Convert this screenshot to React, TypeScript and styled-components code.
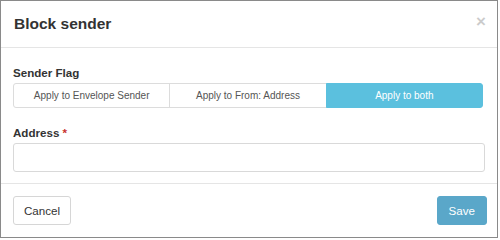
import React, { useState } from "react";
import styled, { createGlobalStyle } from "styled-components";

const Global = createGlobalStyle`
  html, body { margin: 0; padding: 0; background: #fff; }
  body { font-family: "Liberation Sans", Arial, sans-serif; color: #333; }
  * { box-sizing: border-box; }
`;

const Modal = styled.div`
  width: 498px;
  height: 238px;
  border: 1px solid #8a8a8a;
  background: #fff;
  display: flex;
  flex-direction: column;
`;

const Header = styled.div`
  height: 47px;
  border-bottom: 1px solid #e5e5e5;
  display: flex;
  align-items: center;
  justify-content: space-between;
  padding: 0 11px 0 13px;
`;

const Title = styled.h4`
  margin: 0;
  font-size: 15.5px;
  font-weight: bold;
  color: #333;
  line-height: 1.2;
`;

const Close = styled.button`
  border: 0;
  background: none;
  padding: 0;
  font-family: "Liberation Sans", Arial, sans-serif;
  font-size: 17px;
  font-weight: bold;
  line-height: 1;
  color: #000;
  opacity: 0.2;
  margin-top: -6px;
  cursor: pointer;
`;

const Body = styled.div`
  flex: 1;
  padding: 17px 12px 0 12px;
  border-bottom: 1px solid #e5e5e5;
`;

const Field = styled.div<{ $gap?: number }>`
  margin-bottom: ${(p) => p.$gap ?? 0}px;
`;

const Label = styled.label`
  display: block;
  font-size: 11.6px;
  font-weight: bold;
  color: #333;
  line-height: 16px;
  margin-bottom: 2px;
`;

const Req = styled.span`
  color: #c9302c;
  margin-left: 3px;
`;

const Group = styled.div`
  display: flex;
  margin-right: 2px;
  height: 25px;
`;

const Seg = styled.button<{ $active?: boolean }>`
  flex: 1;
  font-family: "Liberation Sans", Arial, sans-serif;
  font-size: 10px;
  color: ${(p) => (p.$active ? "#fff" : "#555")};
  background: ${(p) => (p.$active ? "#5bc0de" : "#fff")};
  border: 1px solid ${(p) => (p.$active ? "#5bc0de" : "#dcdcdc")};
  margin-left: -1px;
  padding: 0;
  cursor: pointer;
  &:first-child { margin-left: 0; border-radius: 3px 0 0 3px; }
  &:last-child { border-radius: 0 3px 3px 0; }
`;

const Input = styled.input`
  display: block;
  width: 100%;
  height: 29px;
  border: 1px solid #d9d9d9;
  border-radius: 3px;
  font-family: "Liberation Sans", Arial, sans-serif;
  font-size: 11.6px;
  padding: 0 8px;
  outline: none;
`;

const Footer = styled.div`
  height: 53px;
  display: flex;
  align-items: center;
  justify-content: space-between;
  padding: 0 10px 0 12px;
`;

const Btn = styled.button<{ $primary?: boolean }>`
  height: 29px;
  padding: 0 ${(p) => (p.$primary ? 11 : 10)}px;
  font-family: "Liberation Sans", Arial, sans-serif;
  font-size: 11.6px;
  border-radius: 3px;
  color: ${(p) => (p.$primary ? "#fff" : "#333")};
  background: ${(p) => (p.$primary ? "#5aa7c9" : "#fff")};
  border: 1px solid ${(p) => (p.$primary ? "#5aa7c9" : "#d6d6d6")};
  cursor: pointer;
`;

export default function App() {
  const [flag, setFlag] = useState(2);
  const opts = ["Apply to Envelope Sender", "Apply to From: Address", "Apply to both"];
  return (
    <>
      <Global />
      <Modal>
        <Header>
          <Title>Block sender</Title>
          <Close aria-label="Close">×</Close>
        </Header>
        <Body>
          <Field $gap={17}>
            <Label>Sender Flag</Label>
            <Group>
              {opts.map((o, i) => (
                <Seg key={o} $active={flag === i} onClick={() => setFlag(i)}>
                  {o}
                </Seg>
              ))}
            </Group>
          </Field>
          <Field>
            <Label>
              Address<Req>*</Req>
            </Label>
            <Input />
          </Field>
        </Body>
        <Footer>
          <Btn>Cancel</Btn>
          <Btn $primary>Save</Btn>
        </Footer>
      </Modal>
    </>
  );
}
